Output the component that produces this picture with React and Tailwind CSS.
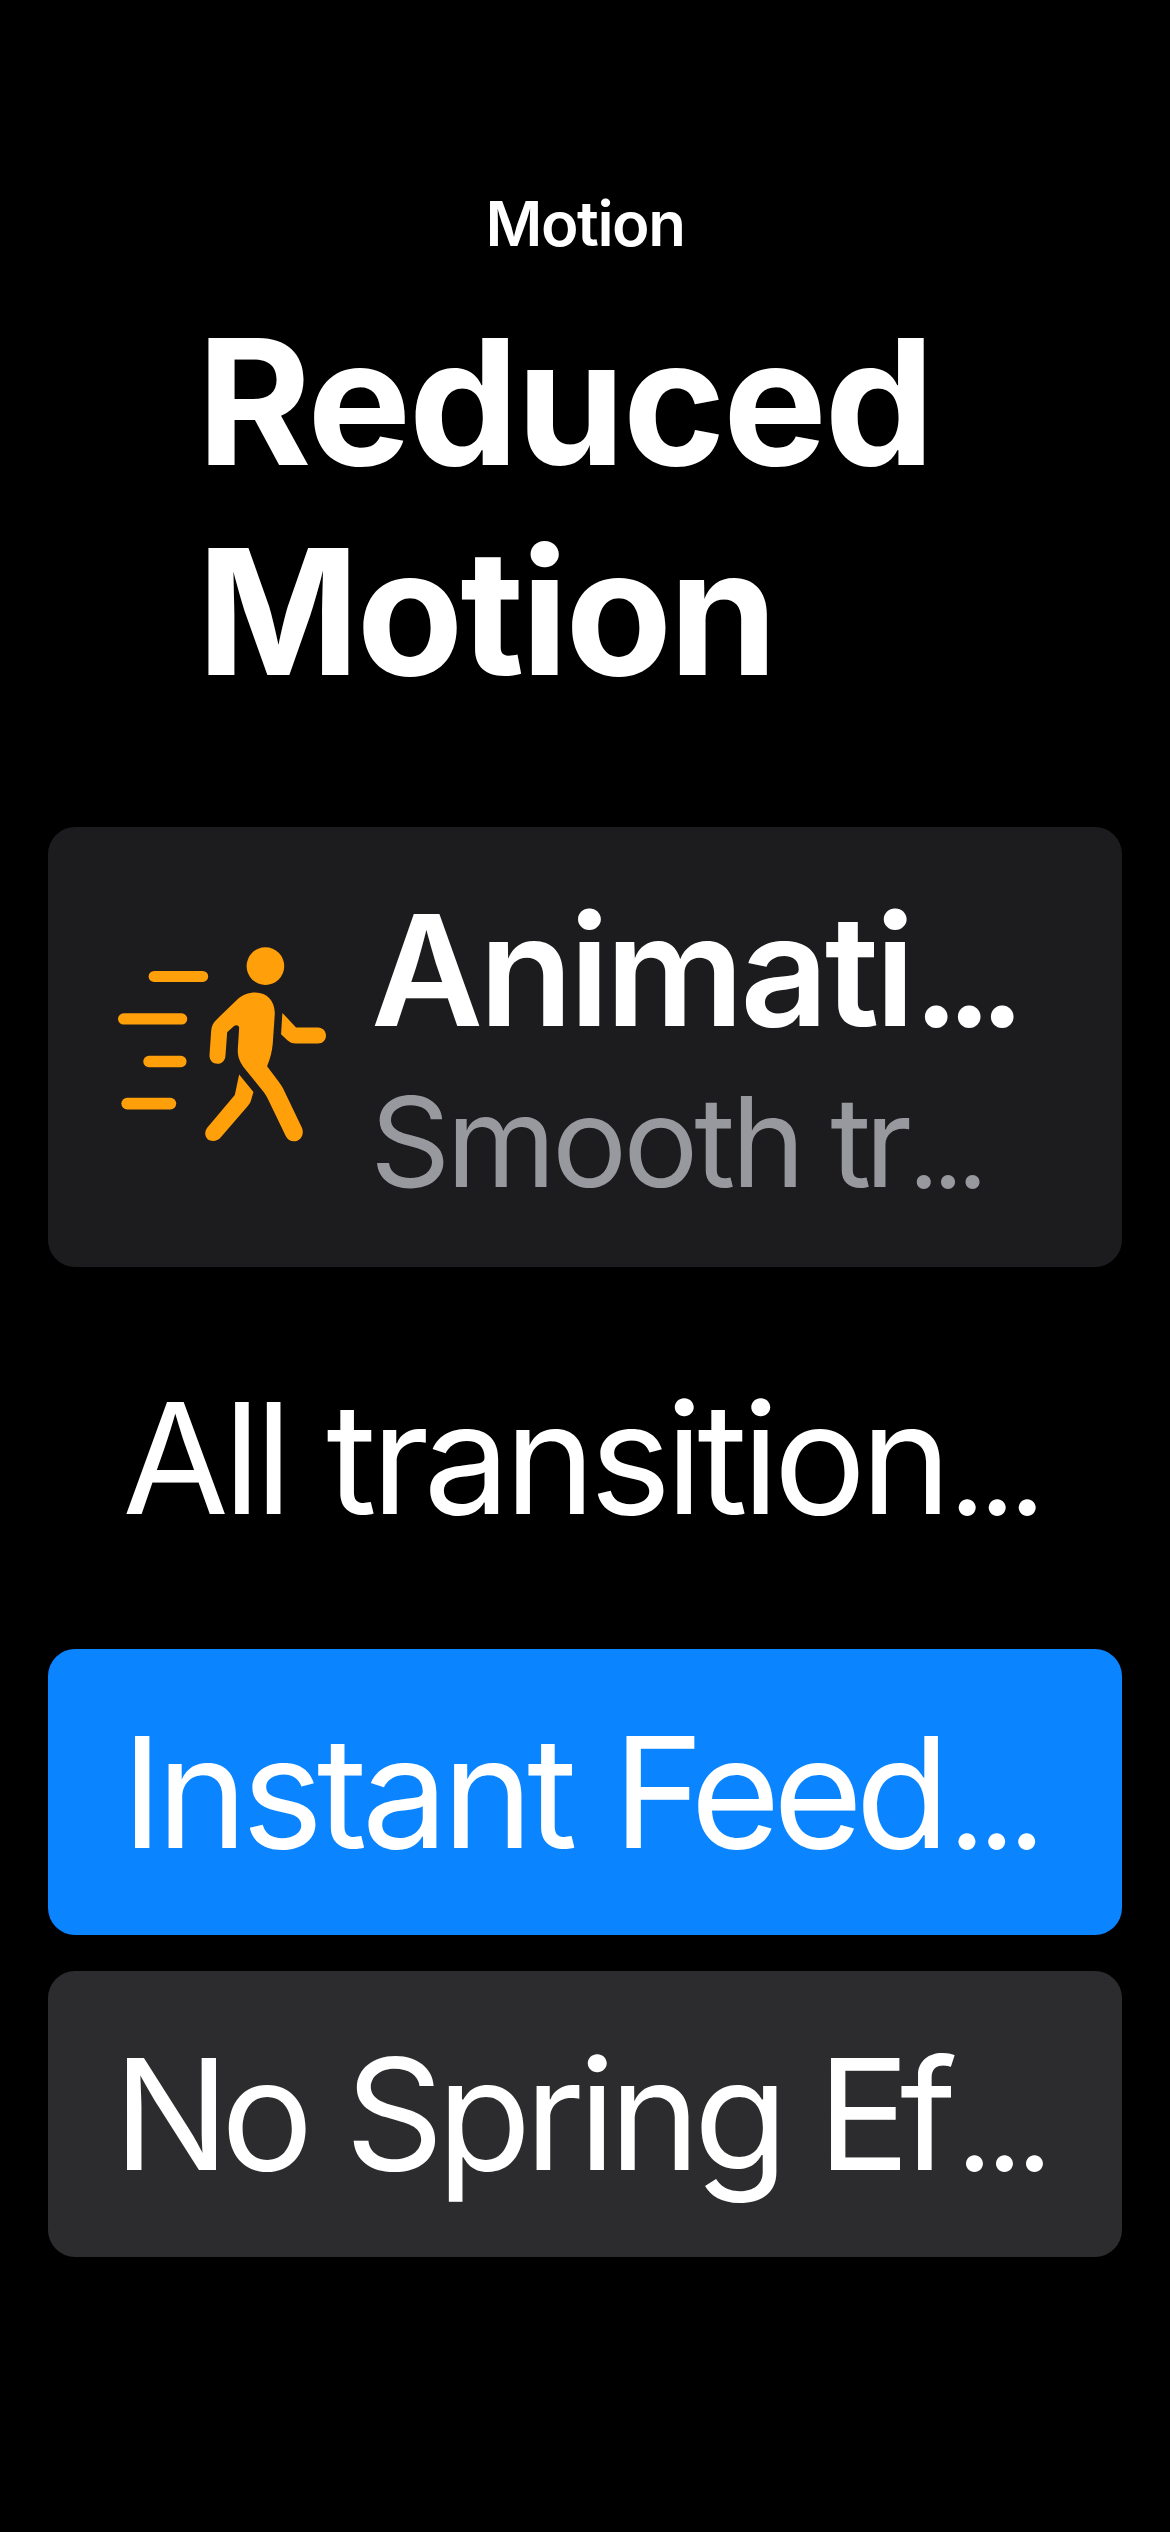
import React from "react";

function WalkingMotionIcon({ className }) {
  return (
    <svg className={className} viewBox="53 81 625 586" fill="currentColor" aria-hidden="true">
      <rect x="145" y="153" width="179" height="33" rx="16.5" />
      <rect x="53" y="280" width="208" height="34" rx="17" />
      <rect x="129" y="408" width="130" height="34" rx="17" />
      <rect x="63" y="534" width="165" height="35" rx="17.5" />
      <circle cx="496" cy="138.5" r="56.5" />
      <path d="M466 218C502 218 526 246 524 284L518 372C516 396 510 418 501 439L536 486C543 496 547 502 552 512L606 625C614 645 600 665 582 665C571 665 562 659 557 649L502 535C498 527 495 522 490 516L433 445C418 425 412 410 413 388L417 324C417 315 407 313 400 320L381 337L376 407C375 422 366 432 352 432C337 432 327 421 328 405L333 333C334 318 339 309 348 300L410 240C428 224 444 218 466 218Z" />
      <path d="M547 279L588 323H654C668 323 678 334 678 347C678 361 668 371 654 371H588C576 371 569 367 562 361L543 343Z" />
      <path d="M417 464L460 517L453 541C451 549 448 553 443 559L362 653C352 664 340 667 328 662C314 655 311 638 321 624L404 526Z" />
    </svg>
  );
}

export default function App() {
  return (
    <main className="flex h-[2532px] w-[1170px] flex-col overflow-hidden bg-black px-12 pt-[187px] font-[Inter,sans-serif] whitespace-nowrap text-white">
      <header className="text-center text-[61.7px] leading-[74px] font-semibold tracking-[-1.43px]">
        Motion
      </header>

      <h1 className="mt-9 pl-[149px] text-[174.6px] leading-[210px] font-bold">
        <span className="block tracking-[-2.4px]">Reduced</span>
        <span className="block tracking-[-3.2px]">Motion</span>
      </h1>

      <section className="mt-[110px] flex h-[440px] rounded-[27px] bg-[#1c1c1e] pt-[50px] pl-[70px]">
        <WalkingMotionIcon className="mt-[70px] h-[195px] w-[208px] shrink-0 text-[#ff9f0a]" />
        <div className="ml-[45px]">
          <h2 className="text-[154px] leading-[186px] font-semibold">
            <span className="tracking-[-4px]">Animati</span>
            <span className="ml-[2px] align-[-1px] text-[144px] leading-none tracking-[-12.9px]">...</span>
          </h2>
          <p className="-ml-px mt-[1px] text-[125.4px] leading-[156px] text-[#98989f]">
            <span className="tracking-[-4.1px]">Smooth</span>
            <span className="ml-[29px] tracking-[-6.5px]">tr</span>
            <span className="ml-[3px] align-[-1px] text-[106px] leading-none tracking-[-6.2px]">...</span>
          </p>
        </div>
      </section>

      <p className="mt-[98px] pl-[74.5px] text-[154px] leading-[186px]">
        <span className="tracking-[-5.5px]">All</span>
        <span className="ml-[39.5px] tracking-[-5.6px]">transition</span>
        <span className="ml-[3px] align-[-1px] text-[128px] leading-none tracking-[-6.9px]">...</span>
      </p>

      <div className="mt-[98px] flex flex-col gap-9">
        <button className="h-[286px] rounded-[27px] bg-[#0a84ff] pl-[73.5px] text-left text-[154px] leading-[186px]">
          <span className="tracking-[-6.1px]">Instant</span>
          <span className="ml-[41.5px] tracking-[-7.3px]">Feed</span>
          <span className="ml-[6px] align-[-1px] text-[128px] leading-none tracking-[-6.9px]">...</span>
        </button>
        <button className="h-[286px] rounded-[27px] bg-[#2c2c2e] pl-[65.5px] text-left text-[154px] leading-[186px]">
          <span className="tracking-[-8.5px]">No</span>
          <span className="ml-[40px] tracking-[-6.6px]">Spring</span>
          <span className="ml-[36px] tracking-[-10px]">Ef</span>
          <span className="ml-[9px] align-[-1px] text-[128px] leading-none tracking-[-6.9px]">...</span>
        </button>
      </div>
    </main>
  );
}
